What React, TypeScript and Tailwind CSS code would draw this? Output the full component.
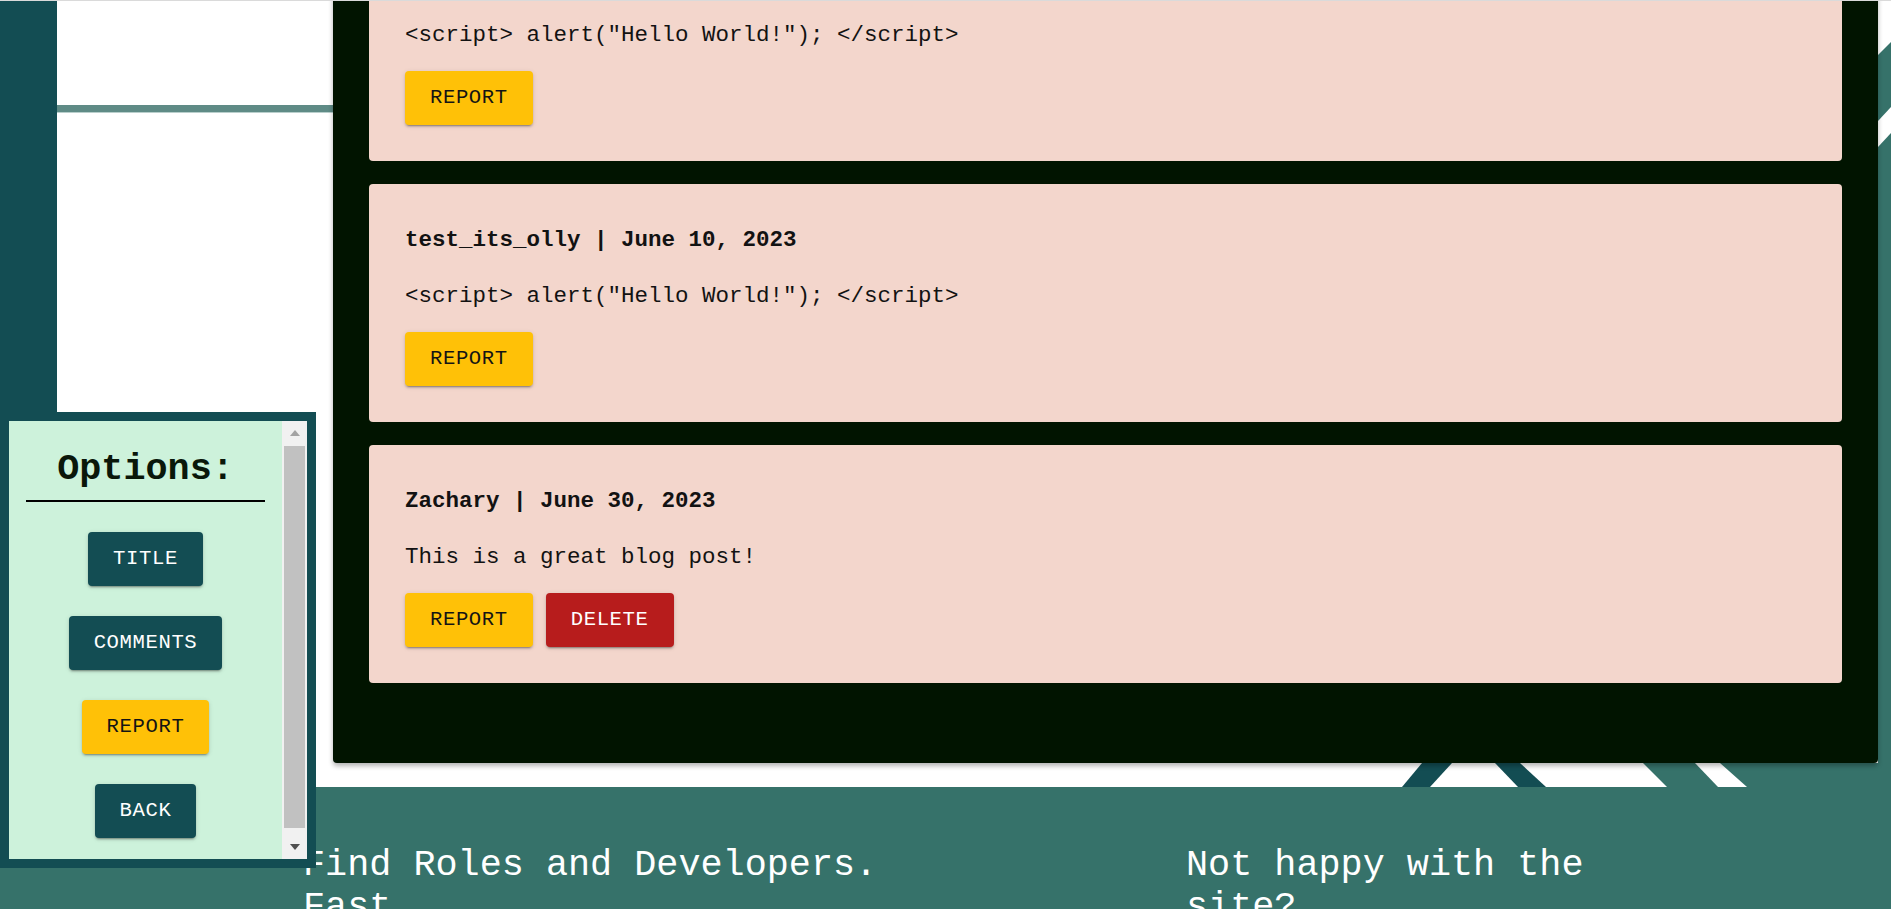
import React from 'react';

type Variant = 'report' | 'delete' | 'teal';

interface Comment {
  id: number;
  author: string;
  date: string;
  body: string;
  canDelete?: boolean;
}

const comments: Comment[] = [
  { id: 1, author: 'test_its_olly', date: 'June 10, 2023', body: '<script> alert("Hello World!"); </script>' },
  { id: 2, author: 'test_its_olly', date: 'June 10, 2023', body: '<script> alert("Hello World!"); </script>' },
  { id: 3, author: 'Zachary', date: 'June 30, 2023', body: 'This is a great blog post!', canDelete: true },
];

const variantClass: Record<Variant, string> = {
  report: 'bg-[#ffc107] text-[#141414]',
  delete: 'bg-[#b71c1c] text-white',
  teal: 'bg-[#134d53] text-white',
};

const ActionButton = ({ label, variant }: { label: string; variant: Variant }) => (
  <button
    className={`h-[54px] px-[25px] rounded-[4px] text-[20.6px] tracking-[0.6px] uppercase leading-none flex items-center justify-center shadow-[0_3px_1px_-2px_rgba(0,0,0,0.2),0_2px_2px_0_rgba(0,0,0,0.14),0_1px_5px_0_rgba(0,0,0,0.12)] ${variantClass[variant]}`}
  >
    {label}
  </button>
);

const CommentCard = ({ comment }: { comment: Comment }) => (
  <div className="bg-[#f3d6cc] rounded-[4px] px-[36px] pt-[40px] pb-[36px] text-[#121212]">
    <p className="font-bold text-[22.5px] leading-[33px] whitespace-pre">
      {comment.author} | {comment.date}
    </p>
    <p className="mt-[22.5px] text-[22.5px] leading-[33px] whitespace-pre">{comment.body}</p>
    <div className="mt-[19.5px] flex gap-[13px]">
      <ActionButton label="Report" variant="report" />
      {comment.canDelete && <ActionButton label="Delete" variant="delete" />}
    </div>
  </div>
);

const Scrollbar = () => (
  <div className="w-[25px] shrink-0 bg-[#f1f1f1] flex flex-col">
    <div className="h-[24px] flex items-center justify-center">
      <svg width="10" height="6" viewBox="0 0 10 6">
        <polygon points="5,0 10,6 0,6" fill="#a3a3a3" />
      </svg>
    </div>
    <div className="flex-1">
      <div className="mt-[1px] mx-[2px] h-[382px] bg-[#c1c1c1]" />
    </div>
    <div className="h-[24px] flex items-center justify-center">
      <svg width="10" height="6" viewBox="0 0 10 6">
        <polygon points="0,0 10,0 5,6" fill="#505050" />
      </svg>
    </div>
  </div>
);

const OptionsPanel = () => (
  <aside className="absolute left-0 top-[412px] w-[316px] h-[456px] border-[9px] border-[#134d53] bg-[#cdf2db] flex z-20">
    <div className="flex-1 overflow-hidden flex flex-col items-center pt-[27px]">
      <h2 className="self-stretch mx-[17px] text-center font-bold text-[36.8px] leading-[42px] pb-[10px] border-b-2 border-black text-[#0a170a]">
        Options:
      </h2>
      <div className="mt-[30px] flex flex-col items-center gap-[30px]">
        <ActionButton label="Title" variant="teal" />
        <ActionButton label="Comments" variant="teal" />
        <ActionButton label="Report" variant="report" />
        <ActionButton label="Back" variant="teal" />
      </div>
    </div>
    <Scrollbar />
  </aside>
);

export default function App() {
  return (
    <div className="relative w-[1891px] h-[909px] overflow-hidden bg-white font-['Liberation_Mono','DejaVu_Sans_Mono',monospace]">
      <div className="flex h-[763px]">
        <div className="w-[57px] shrink-0 bg-[#134d53]" />
        <div className="w-[276px] shrink-0 bg-white">
          <div className="mt-[105px] h-[7px] bg-[#5f8b86]" />
          <div className="h-px bg-[#b9cfcc]" />
        </div>
        <main className="w-[1545px] shrink-0 relative z-10 flex flex-col justify-end">
          <div className="shrink-0 bg-[#011400] px-[36px] pb-[80px] rounded-b-[4px] shadow-[0_3px_5px_rgba(0,0,0,0.3)] flex flex-col gap-[23px]">
            {comments.map((c) => (
              <CommentCard key={c.id} comment={c} />
            ))}
          </div>
        </main>
        <div className="w-[13px] shrink-0">
          <svg width="13" height="763" viewBox="0 0 13 763">
            <rect width="13" height="763" fill="#36726a" />
            <polygon points="0,0 13,0 13,42 0,55" fill="#ffffff" />
            <polygon points="0,121 13,107 13,133 0,147" fill="#ffffff" />
          </svg>
        </div>
      </div>
      <div className="flex h-[24px]">
        <div className="w-[57px] shrink-0 bg-[#134d53]" />
        <div className="w-[276px] shrink-0 bg-white" />
        <svg width="1558" height="24" viewBox="0 0 1558 24" className="shrink-0">
          <rect width="1558" height="24" fill="#ffffff" />
          <polygon points="1089,0 1119,0 1097,24 1069,24" fill="#134d53" />
          <polygon points="1162,0 1187,0 1213,24 1185,24" fill="#134d53" />
          <polygon points="1310,0 1362,0 1385,24 1334,24" fill="#36726a" />
          <polygon points="1387,0 1558,0 1558,24 1414,24" fill="#36726a" />
        </svg>
      </div>
      <footer className="h-[122px] bg-[#36726a] text-white flex pl-[303px] pt-[57px] gap-[263px]">
        <h2 className="w-[620px] shrink-0 text-[36.8px] leading-[42px]">Find Roles and Developers. Fast</h2>
        <h2 className="w-[460px] shrink-0 text-[36.8px] leading-[42px]">Not happy with the site?</h2>
      </footer>
      <OptionsPanel />
      <div className="absolute top-0 left-0 w-full h-px bg-[#dadada] z-30" />
    </div>
  );
}
